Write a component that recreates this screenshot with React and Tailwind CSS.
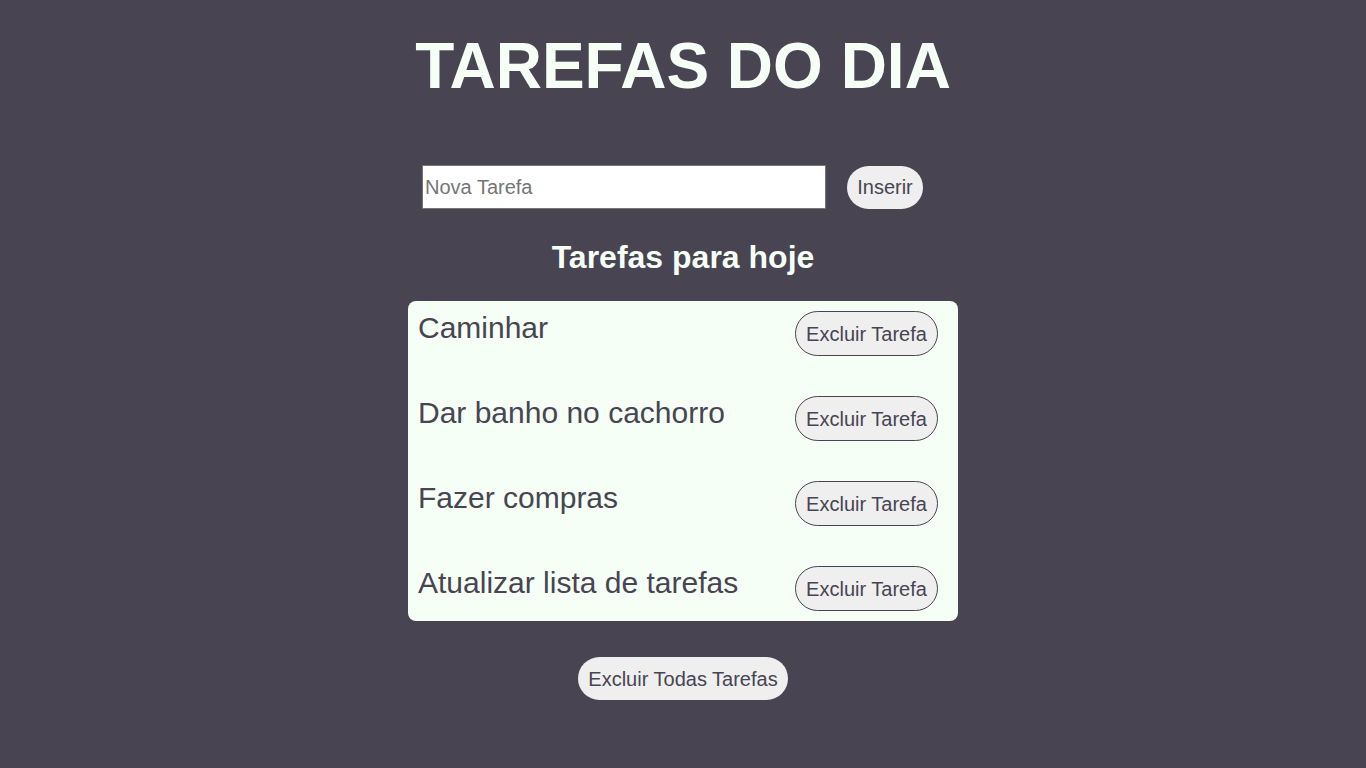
import React, { useState } from 'react';

const initialTasks = [
  "Caminhar",
  "Dar banho no cachorro",
  "Fazer compras",
  "Atualizar lista de tarefas",
];

const App = () => {
  const [tasks, setTasks] = useState(initialTasks);
  const [newTask, setNewTask] = useState("");

  const addTask = () => {
    if (!newTask.trim()) return;
    setTasks((prev) => [...prev, newTask.trim()]);
    setNewTask("");
  };

  const removeTask = (idx) => {
    setTasks((prev) => prev.filter((_, i) => i !== idx));
  };

  return (
    <div className="min-h-screen bg-[#484452] font-['Liberation_Sans',Arial,sans-serif] flex flex-col items-center">
      <h1 className="mt-[30px] text-[64px] leading-[73.5px] font-bold text-[#f5fff5]">
        TAREFAS DO DIA
      </h1>

      {/* Form */}
      <div className="mt-[61.5px] flex items-center justify-center">
        <input
          value={newTask}
          onChange={(e) => setNewTask(e.target.value)}
          placeholder="Nova Tarefa"
          className="w-[404px] h-[44px] bg-white border border-[#767676] px-[2px] text-[20px] text-[#484452] placeholder-[#757575] outline-none"
        />
        <button
          onClick={addTask}
          className="ml-[21px] mr-[21px] w-[76px] h-[43px] rounded-full bg-[#efefef] text-[20px] text-[#484452] flex items-center justify-center"
        >
          Inserir
        </button>
      </div>

      <h2 className="mt-[29.5px] text-[32px] leading-[36.8px] font-bold text-[#f5fff5]">
        Tarefas para hoje
      </h2>

      {/* Task list */}
      <ul className="mt-[26px] w-[550px] bg-[#f5fff5] rounded-[8px] pt-[10px] pb-[10px] pl-[10px] pr-[20px] flex flex-col gap-[40px]">
        {tasks.map((task, idx) => (
          <li key={idx} className="flex items-start justify-between">
            <span className="text-[30px] leading-[34.5px] text-[#484452]">{task}</span>
            <button
              onClick={() => removeTask(idx)}
              className="w-[143px] h-[45px] shrink-0 rounded-full border border-[#484452] bg-[#efefef] text-[20px] text-[#484452] flex items-center justify-center"
            >
              Excluir Tarefa
            </button>
          </li>
        ))}
      </ul>

      <button
        onClick={() => setTasks([])}
        className="mt-[36px] w-[210px] h-[43px] rounded-full bg-[#efefef] text-[20px] text-[#484452] flex items-center justify-center"
      >
        Excluir Todas Tarefas
      </button>
    </div>
  );
};

export default App;
